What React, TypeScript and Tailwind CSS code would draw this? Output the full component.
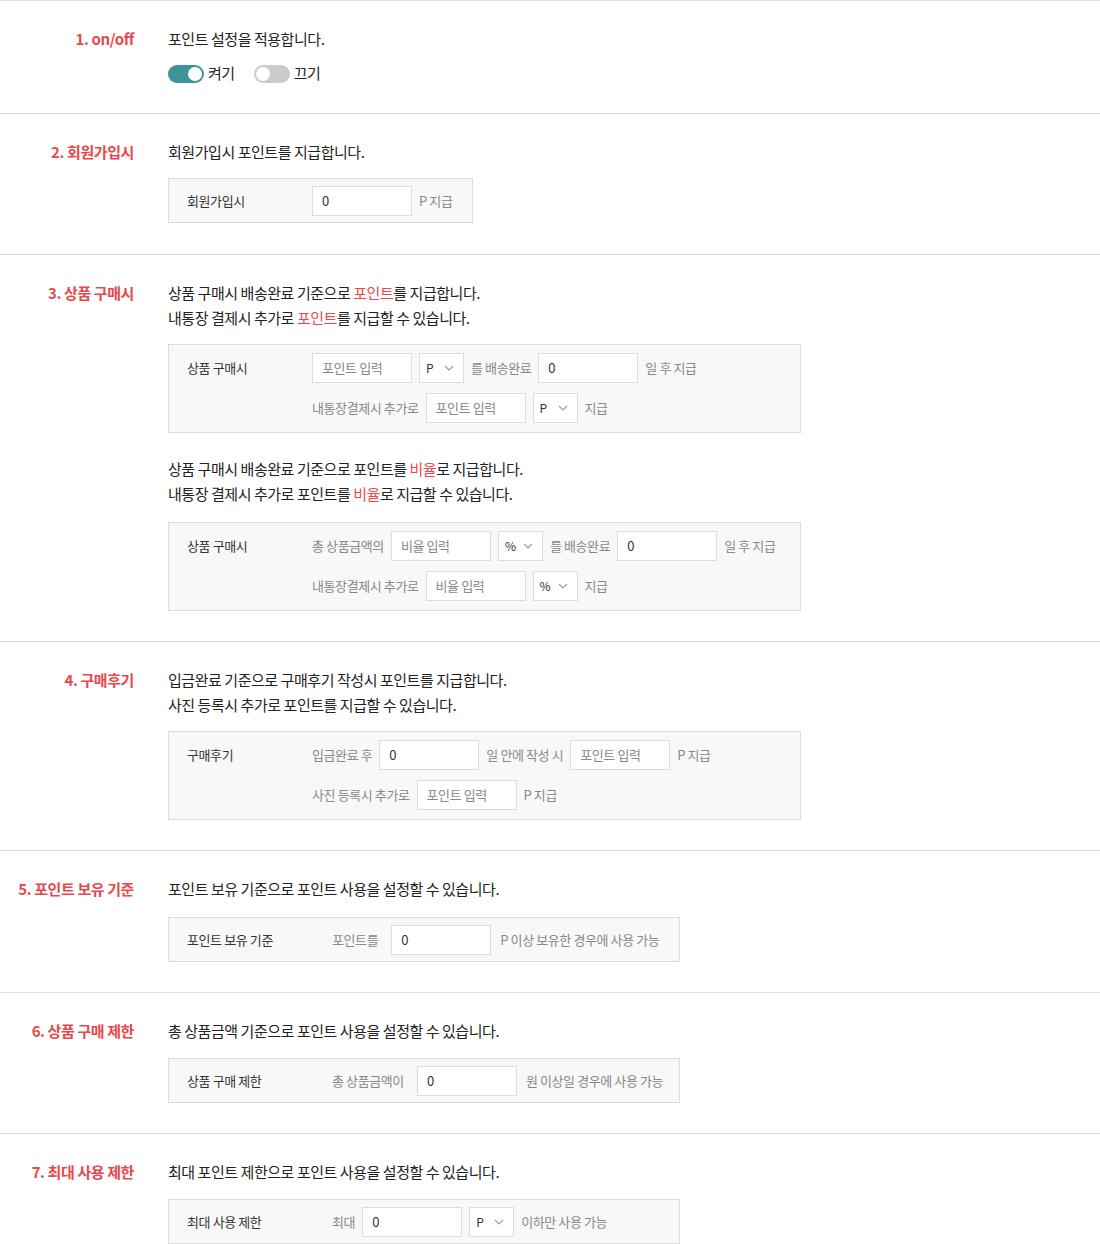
import React from "react";

const FONT = { fontFamily: '"Noto Sans CJK KR", "Noto Sans", sans-serif' };

function Toggle({ on }: { on: boolean }) {
  return (
    <div
      className={
        "relative h-[18px] w-[36px] rounded-full " +
        (on ? "bg-[#3d9397]" : "bg-[#c9cbcc]")
      }
    >
      <div
        className={
          "absolute top-[2px] h-[14px] w-[14px] rounded-full bg-white " +
          (on ? "right-[2px]" : "left-[2px]")
        }
      />
    </div>
  );
}

function Input({ value, placeholder }: { value?: string; placeholder?: string }) {
  return (
    <div className="flex h-[30px] w-[100px] shrink-0 items-center border border-[#dcdcdc] bg-white pl-[9px]">
      {value !== undefined ? (
        <span className="text-[#333]">{value}</span>
      ) : (
        <span className="text-[#888]">{placeholder}</span>
      )}
    </div>
  );
}

function Select({ value }: { value: string }) {
  return (
    <div className="flex h-[30px] w-[45px] shrink-0 items-center justify-between border border-[#dcdcdc] bg-white pl-[6px] pr-[9px] text-[12px] text-[#333]">
      <span>{value}</span>
      <svg width="10" height="6" viewBox="0 0 10 6" fill="none">
        <path d="M1 1l4 4 4-4" stroke="#999" strokeWidth="1.1" />
      </svg>
    </div>
  );
}

function G({ children }: { children: React.ReactNode }) {
  return <span className="shrink-0 whitespace-nowrap text-[#888]">{children}</span>;
}

function Row({ children }: { children: React.ReactNode }) {
  return <div className="flex h-[30px] items-center gap-[7px]">{children}</div>;
}

function Box({
  label,
  labelW,
  width,
  rows,
}: {
  label: string;
  labelW: string;
  width?: string;
  rows: React.ReactNode[];
}) {
  const multi = rows.length > 1;
  return (
    <div
      className={
        "flex border border-[#dcdcdc] bg-[#f8f8f8] pl-[18px] text-[13px] tracking-[-0.4px] " +
        (width ? width + " " : "w-fit pr-[20px] ") +
        (multi ? "pt-[8px] pb-[9px]" : "pt-[7px] pb-[6px]")
      }
    >
      <div className={"flex h-[30px] shrink-0 items-center text-[#333] " + labelW}>
        {label}
      </div>
      <div className="flex flex-col gap-[10px]">{rows}</div>
    </div>
  );
}

function Section({
  title,
  children,
  pb,
}: {
  title: string;
  children: React.ReactNode;
  pb?: string;
}) {
  return (
    <div className={"flex border-t border-[#dddddd] pt-[25px] " + (pb ?? "pb-[30px]")}>
      <div className="w-[134px] shrink-0 text-right text-[15px] font-bold leading-[25px] tracking-[-0.4px] text-[#e8474c]">
        {title}
      </div>
      <div className="ml-[34px] flex flex-col">{children}</div>
    </div>
  );
}

function Desc({ children, className }: { children: React.ReactNode; className?: string }) {
  return (
    <div className={"text-[15px] leading-[25px] tracking-[-0.45px] text-[#222] " + (className ?? "")}>
      {children}
    </div>
  );
}

const R = ({ children }: { children: React.ReactNode }) => (
  <span className="text-[#f0474e]">{children}</span>
);

export default function App() {
  return (
    <div className="w-[1100px] bg-white" style={FONT}>
      <Section title="1. on/off" pb="pb-[27px]">
        <Desc>포인트 설정을 적용합니다.</Desc>
        <div className="mt-[10px] flex h-[25px] items-center text-[15px] tracking-[-0.45px] text-[#222]">
          <Toggle on />
          <span className="ml-[4px]">켜기</span>
          <div className="ml-[19px]">
            <Toggle on={false} />
          </div>
          <span className="ml-[4px]">끄기</span>
        </div>
      </Section>

      <Section title="2. 회원가입시" pb="pb-[31px]">
        <Desc>회원가입시 포인트를 지급합니다.</Desc>
        <div className="mt-[14px]">
          <Box
            label="회원가입시"
            labelW="w-[125px]"
            rows={[
              <Row key="a">
                <Input value="0" />
                <G>P 지급</G>
              </Row>,
            ]}
          />
        </div>
      </Section>

      <Section title="3. 상품 구매시">
        <Desc>
          상품 구매시 배송완료 기준으로 <R>포인트</R>를 지급합니다.
        </Desc>
        <Desc>
          내통장 결제시 추가로 <R>포인트</R>를 지급할 수 있습니다.
        </Desc>
        <div className="mt-[14px]">
          <Box
            label="상품 구매시"
            labelW="w-[125px]"
            width="w-[633px]"
            rows={[
              <Row key="a">
                <Input placeholder="포인트 입력" />
                <Select value="P" />
                <G>를 배송완료</G>
                <Input value="0" />
                <G>일 후 지급</G>
              </Row>,
              <Row key="b">
                <G>내통장결제시 추가로</G>
                <Input placeholder="포인트 입력" />
                <Select value="P" />
                <G>지급</G>
              </Row>,
            ]}
          />
        </div>
        <Desc className="mt-[23px]">
          상품 구매시 배송완료 기준으로 포인트를 <R>비율</R>로 지급합니다.
        </Desc>
        <Desc>
          내통장 결제시 추가로 포인트를 <R>비율</R>로 지급할 수 있습니다.
        </Desc>
        <div className="mt-[16px]">
          <Box
            label="상품 구매시"
            labelW="w-[125px]"
            width="w-[633px]"
            rows={[
              <Row key="a">
                <G>총 상품금액의</G>
                <Input placeholder="비율 입력" />
                <Select value="%" />
                <G>를 배송완료</G>
                <Input value="0" />
                <G>일 후 지급</G>
              </Row>,
              <Row key="b">
                <G>내통장결제시 추가로</G>
                <Input placeholder="비율 입력" />
                <Select value="%" />
                <G>지급</G>
              </Row>,
            ]}
          />
        </div>
      </Section>

      <Section title="4. 구매후기">
        <Desc>입금완료 기준으로 구매후기 작성시 포인트를 지급합니다.</Desc>
        <Desc>사진 등록시 추가로 포인트를 지급할 수 있습니다.</Desc>
        <div className="mt-[14px]">
          <Box
            label="구매후기"
            labelW="w-[125px]"
            width="w-[633px]"
            rows={[
              <Row key="a">
                <G>입금완료 후</G>
                <Input value="0" />
                <G>일 안에 작성 시</G>
                <Input placeholder="포인트 입력" />
                <G>P 지급</G>
              </Row>,
              <Row key="b">
                <G>사진 등록시 추가로</G>
                <Input placeholder="포인트 입력" />
                <G>P 지급</G>
              </Row>,
            ]}
          />
        </div>
      </Section>

      <Section title="5. 포인트 보유 기준">
        <Desc>포인트 보유 기준으로 포인트 사용을 설정할 수 있습니다.</Desc>
        <div className="mt-[16px]">
          <Box
            label="포인트 보유 기준"
            labelW="w-[145px]"
            width="w-[512px]"
            rows={[
              <Row key="a">
                <G>포인트를</G>
                <div className="ml-[6px]">
                  <Input value="0" />
                </div>
                <G>
                  <span className="ml-[2px]">P 이상 보유한 경우에 사용 가능</span>
                </G>
              </Row>,
            ]}
          />
        </div>
      </Section>

      <Section title="6. 상품 구매 제한">
        <Desc>총 상품금액 기준으로 포인트 사용을 설정할 수 있습니다.</Desc>
        <div className="mt-[15px]">
          <Box
            label="상품 구매 제한"
            labelW="w-[145px]"
            width="w-[512px]"
            rows={[
              <Row key="a">
                <G>총 상품금액이</G>
                <div className="ml-[6px]">
                  <Input value="0" />
                </div>
                <G>
                  <span className="ml-[2px]">원 이상일 경우에 사용 가능</span>
                </G>
              </Row>,
            ]}
          />
        </div>
      </Section>

      <Section title="7. 최대 사용 제한" pb="pb-[20px]">
        <Desc>최대 포인트 제한으로 포인트 사용을 설정할 수 있습니다.</Desc>
        <div className="mt-[15px]">
          <Box
            label="최대 사용 제한"
            labelW="w-[145px]"
            width="w-[512px]"
            rows={[
              <Row key="a">
                <G>최대</G>
                <Input value="0" />
                <Select value="P" />
                <G>이하만 사용 가능</G>
              </Row>,
            ]}
          />
        </div>
      </Section>
    </div>
  );
}
